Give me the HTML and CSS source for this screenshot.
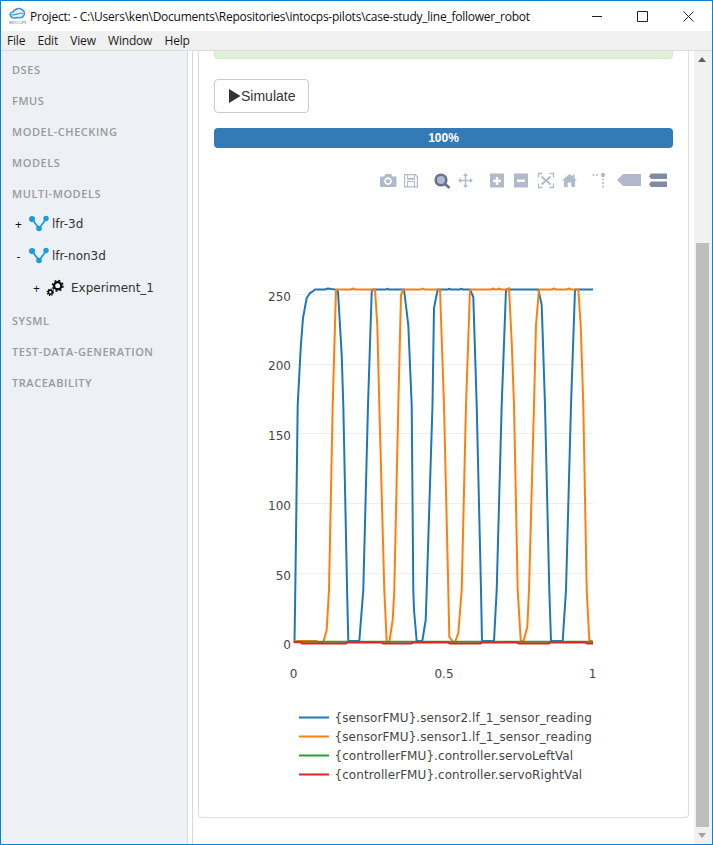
FILE: index.html
```html
<!DOCTYPE html>
<html lang="en">
<head>
<meta charset="utf-8">
<title>Project</title>
<link rel="stylesheet" href="styles.css">
</head>
<body>
<div class="window">
  <header class="titlebar">
    <svg class="logo" width="18" height="18" viewBox="0 0 18 18">
      <path class="logo-cloud" d="M3 9.500c-2-2-.5-4.500 2-4.500C6.500 2 11 .5 14 2.500c2.500 1.500 3 4 2 5.500c-1 2.500-4 3-7 2.500c-2 1-5 .5-6-1z"/>
      <path class="logo-swoosh" d="M3 7.500c4 2 7-2.500 12-1"/>
      <text class="logo-text" x="1" y="16.500">INTO-CPS</text>
    </svg>
    <span class="title">Project: - C:\Users\ken\Documents\Repositories\intocps-pilots\case-study_line_follower_robot</span>
    <div class="winbtns">
      <svg width="10" height="10" viewBox="0 0 10 10"><path class="winicon" d="M0 5.500h10"/></svg>
      <svg width="11" height="11" viewBox="0 0 11 11"><path class="winicon" d="M.5.500h10v10h-10z"/></svg>
      <svg width="11" height="11" viewBox="0 0 11 11"><path class="winicon" d="M.5.500l10 10M10.500.500l-10 10"/></svg>
    </div>
  </header>
  <nav class="menubar">
    <span>File</span><span>Edit</span><span>View</span><span>Window</span><span>Help</span>
  </nav>
  <div class="content">
    <aside class="sidebar">
      <div class="section">DSES</div>
      <div class="section">FMUS</div>
      <div class="section">MODEL-CHECKING</div>
      <div class="section">MODELS</div>
      <div class="section">MULTI-MODELS</div>
      <div class="tree-row">
        <span class="expander">+</span>
        <svg class="model-icon" width="21" height="18" viewBox="0 0 21 18"><path class="model-link" d="M4 4l7 9.500L18 4"/><circle class="model-dot" cx="4" cy="4" r="3"/><circle class="model-dot" cx="18" cy="3.500" r="2.700"/><circle class="model-dot" cx="11" cy="13.500" r="2.800"/></svg>
        <span>lfr-3d</span>
      </div>
      <div class="tree-row">
        <span class="expander">-</span>
        <svg class="model-icon" width="21" height="18" viewBox="0 0 21 18"><path class="model-link" d="M4 4l7 9.500L18 4"/><circle class="model-dot" cx="4" cy="4" r="3"/><circle class="model-dot" cx="18" cy="3.500" r="2.700"/><circle class="model-dot" cx="11" cy="13.500" r="2.800"/></svg>
        <span>lfr-non3d</span>
      </div>
      <div class="tree-row tree-row-nested">
        <span class="expander">+</span>
        <svg class="gear-icon" width="18" height="18" viewBox="0 0 18 18">
          <circle class="gear-big" cx="11.700" cy="6.700" r="3.600"/><circle class="gear-big-teeth" cx="11.700" cy="6.700" r="5.300"/>
          <circle class="gear-small" cx="4.300" cy="13.300" r="2"/><circle class="gear-small-teeth" cx="4.300" cy="13.300" r="3.200"/>
        </svg>
        <span>Experiment_1</span>
      </div>
      <div class="section">SYSML</div>
      <div class="section">TEST-DATA-GENERATION</div>
      <div class="section">TRACEABILITY</div>
    </aside>
    <main class="main">
      <section class="panel">
        <div class="alert"></div>
        <button class="btn" type="button">
          <svg class="play" width="12" height="14" viewBox="0 0 12 14"><path d="M0 0l11.500 7L0 14z"/></svg>Simulate
        </button>
        <div class="progress">100%</div>
        <svg class="chart" width="459" height="650" viewBox="214 160 459 650">
          <g class="tool">
            <path fill-rule="evenodd" d="M381 176.500h3l1.500-2.500h5.500l1.500 2.500h3a1 1 0 0 1 1 1v8.500a1 1 0 0 1-1 1h-14.500a1 1 0 0 1-1-1v-8.500a1 1 0 0 1 1-1zM388 177.300a3.800 3.800 0 1 0 .01 0zM388 179a2.100 2.100 0 1 1-.01 0z"/>
            <path fill-rule="evenodd" d="M404 174h11.500l2.500 2.500v11h-14zM405.200 175.200v11.100h1.800v-5.300h8v5.300h1.800v-9.300l-1.800-1.800v4.600h-8v-4.600zM408 181.900v4.400h6v-4.400zM407.900 175.200v2.800h6.200v-2.800z"/>
          </g>
          <circle class="tool-zoom-lens" cx="441" cy="180" r="5.300"/>
          <path class="tool-zoom-handle" d="M445 184l4.500 4"/>
          <g class="tool">
            <path d="M465.500 173l2.500 3h-1.800v3.800h3.800V178l3 2.500-3 2.500v-1.800h-3.800V185h1.800l-2.500 3-2.500-3h1.800v-3.800h-3.800v1.800l-3-2.500 3-2.500v1.800h3.800V176H463z"/>
            <path fill-rule="evenodd" d="M490 173.500h14v14h-14zM495.800 177v2.700h-2.800v2.600h2.800v2.700h2.400v-2.700h2.800v-2.600h-2.800V177z"/>
            <path fill-rule="evenodd" d="M514 173.500h14v14h-14zM517 179.500v2.600h8v-2.600z"/>
          </g>
          <path class="tool-line" d="M538.500 177.500v-4h4M549.500 173.500h4v4M553.500 183.500v4h-4M542.500 187.500h-4v-4"/>
          <path class="tool-line-thick" d="M541.500 176.500l9 8M550.500 176.500l-9 8"/>
          <g class="tool">
            <path d="M569.500 174l3 2.600V174.500h2v3.800l2.500 2.200h-2v6.500h-3.700v-4.500h-3.600v4.500H564v-6.500h-2z"/>
            <circle cx="593.500" cy="175" r="1"/><circle cx="597" cy="175" r="1"/><circle cx="603" cy="175" r="2.200"/>
            <circle cx="603" cy="179.500" r="1"/><circle cx="603" cy="183" r="1"/><circle cx="603" cy="186.500" r="1"/>
            <path d="M617 180l6-6h18v12h-18z"/>
          </g>
          <path class="tool-active" d="M651 173.500h16v5.500h-16l-2-2.700zM651 181.500h16v5.500h-16l-2-2.800z"/>
          <g class="grid">
            <path d="M294 294.500h299M294 364.500h299M294 433.500h299M294 503.500h299M294 573.500h299"/>
          </g>
          <g class="ticks ticks-y">
            <text x="291" y="301">250</text>
            <text x="291" y="370">200</text>
            <text x="291" y="440">150</text>
            <text x="291" y="510">100</text>
            <text x="291" y="580">50</text>
            <text x="291" y="649">0</text>
          </g>
          <g class="ticks ticks-x">
            <text x="293.500" y="678">0</text>
            <text x="444" y="678">0.5</text>
            <text x="592.500" y="678">1</text>
          </g>
          <polyline class="trace trace-blue" points="294.500,643 295.300,590 297.700,405 300.700,348 303,318 306.700,298 310,293 312,292 315,289.500 325,289.500 328,288.500 331,289 335,289.500 338,291.600 341.700,355 343.300,405 347.300,600 348.300,641 359.300,641 363.300,590 368,405 371.700,292 372.700,289.500 386,289.500 387,288.800 389,289.500 404,289.500 408.300,325 411.700,405 413.300,590 414,610 416.700,641 422.300,641 425.700,620 426.700,590 432.500,405 434,308 437.700,289.500 448,289.500 449,288.800 451,289.500 460,289.500 461,288.800 463,289.500 470,289.500 473.300,297 476.700,405 481,590 482,641 494,641 496.700,590 501.700,405 506,289.500 538.300,289.500 541.700,305 545,405 549.300,590 551,641 562.700,641 566,590 571,405 575,289.500 593,289.500"/>
          <polyline class="trace trace-orange" points="294,641 316,641 318,642 323.300,642 326.700,630 329,590 332.700,405 336,289.500 351,289.500 353,288.500 355,289.500 375,289.500 377.300,325 379.300,405 384.300,590 386.700,642 389.300,642 392.700,620 394.300,590 398.300,405 401,295 403.300,289.500 421,289.500 422.700,288.500 424.500,289.500 440,289.500 444,405 448.300,590 449.300,637 453.300,642 455,642 458.300,633 461.700,590 466,405 470,289.500 491,289.500 493,288.500 495,289.500 497,289.500 499,288.500 501,289.500 507,289.500 509,288 511.700,342 514,405 517.700,590 520.700,640 523.300,642 527.300,627 529,590 534,405 536,325 539,289.500 552,289.500 554,288.500 556,289.500 567,289.500 569,288.500 571,289.500 578.300,289.500 580.700,325 583.300,405 586.700,590 589.300,640 593,642"/>
          <polyline class="trace trace-green" points="294,641.800 593,641.800"/>
          <polyline class="trace trace-red" points="294,642.300 301,642.300 302,643.500 346,643.500 347,642.500 381.500,642.500 383,643.500 411,643.500 413,642.500 448,642.500 450,643.500 480,643.500 482,642.500 517,642.500 519,643.500 549,643.500 550,642.500 585.500,642.500 587,643.500 593,643.500"/>
          <path class="legend-line trace-blue" d="M299 717.500h30"/>
          <path class="legend-line trace-orange" d="M299 736.500h30"/>
          <path class="legend-line trace-green" d="M299 755.500h30"/>
          <path class="legend-line trace-red" d="M299 774.500h30"/>
          <g class="legend-text">
            <text x="334.500" y="722">{sensorFMU}.sensor2.lf_1_sensor_reading</text>
            <text x="334.500" y="741">{sensorFMU}.sensor1.lf_1_sensor_reading</text>
            <text x="334.500" y="760">{controllerFMU}.controller.servoLeftVal</text>
            <text x="334.500" y="779">{controllerFMU}.controller.servoRightVal</text>
          </g>
        </svg>
      </section>
    </main>
    <div class="scrollbar">
      <div class="scroll-arrow"><svg width="8" height="5" viewBox="0 0 8 5"><path d="M4 0l4 5H0z"/></svg></div>
      <div class="scroll-track"><div class="scroll-thumb"></div></div>
      <div class="scroll-arrow"><svg width="8" height="5" viewBox="0 0 8 5"><path d="M0 0h8L4 5z"/></svg></div>
    </div>
  </div>
</div>
</body>
</html>
```
FILE: styles.css
```css
* { box-sizing: border-box; }
html, body { margin: 0; padding: 0; height: 100%; overflow: hidden; }
body { font-family: "Open Sans", "Noto Sans", sans-serif; background: #fff; }

.window {
  display: flex;
  flex-direction: column;
  width: 713px;
  height: 845px;
  border: 1px solid #0f7fd0;
  overflow: hidden;
}

.titlebar {
  display: flex;
  align-items: center;
  height: 30px;
  flex: none;
  background: #fff;
  padding-left: 7px;
}
.logo { flex: none; }
.logo-cloud { fill: #e3f1fb; stroke: #3f9bd6; stroke-width: 1.6; }
.logo-swoosh { fill: none; stroke: #3f9bd6; stroke-width: 1.2; }
.logo-text { font-family: "Liberation Sans", sans-serif; font-size: 3.8px; fill: #666; }
.title { margin-left: 4px; font-size: 12px; color: #111; white-space: nowrap; letter-spacing: -.245px; }
.winbtns { display: flex; align-items: center; gap: 35px; margin-left: auto; padding-right: 18px; }
.winbtns svg { display: block; }
.winicon { fill: none; stroke: #222; stroke-width: 1; }

.menubar {
  display: flex;
  align-items: center;
  gap: 12.3px;
  height: 20px;
  flex: none;
  padding-left: 6px;
  background: #f0f0f0;
  border-bottom: 1px solid #dcdcdc;
  font-size: 12px;
  color: #1a1a1a;
  letter-spacing: -.2px;
}

.content { display: flex; flex: 1; min-height: 0; }

.sidebar {
  width: 187px;
  flex: none;
  padding-top: 3px;
  background: #edf0f5;
  border-right: 1px solid #d8d8d8;
}
.section {
  height: 31px;
  line-height: 31px;
  padding-left: 11px;
  font-size: 11px;
  font-weight: 600;
  letter-spacing: .55px;
  color: #9a9a9a;
  white-space: nowrap;
}
.tree-row {
  display: flex;
  align-items: center;
  height: 32px;
  padding-left: 13px;
  padding-bottom: 2px;
  font-family: "DejaVu Sans", Verdana, sans-serif;
  font-size: 12px;
  color: #333;
  white-space: nowrap;
}
.tree-row-nested { padding-left: 31px; }
.expander {
  width: 9px;
  margin-right: 5px;
  flex: none;
  font-family: "Open Sans", sans-serif;
  text-align: center;
  color: #111;
}
.model-icon { flex: none; margin-right: 3px; }
.model-link { fill: none; stroke: #1a9be0; stroke-width: 1.800; }
.model-dot { fill: #1a9be0; }
.gear-icon { flex: none; margin-right: 7px; }
.gear-big { fill: none; stroke: #000; stroke-width: 2.200; }
.gear-big-teeth { fill: none; stroke: #000; stroke-width: 1.400; stroke-dasharray: 2.080 2.080; }
.gear-small { fill: none; stroke: #000; stroke-width: 1.500; }
.gear-small-teeth { fill: none; stroke: #000; stroke-width: 1.100; stroke-dasharray: 1.260 1.250; }

.main {
  flex: none;
  width: 502px;
  margin-left: 4px;
  padding: 0 5px;
  border-left: 1px solid #d8d8d8;
  background: #fff;
}
.panel {
  padding: 0 15px 7px;
  border: 1px solid #ddd;
  border-top: 0;
  border-radius: 0 0 4px 4px;
}
.alert {
  height: 8px;
  background: #dff0d8;
  border: 1px solid #d6e9c6;
  border-top: 0;
  border-radius: 0 0 4px 4px;
}
.btn {
  display: flex;
  align-items: center;
  width: 95px;
  height: 34px;
  margin-top: 20px;
  padding: 0 0 0 14px;
  background: #fff;
  border: 1px solid #ccc;
  border-radius: 4px;
  font-family: "Liberation Sans", Arial, sans-serif;
  font-size: 14px;
  color: #333;
}
.play { flex: none; fill: #333; }
.progress {
  height: 20px;
  margin-top: 15px;
  background: #337ab7;
  border-radius: 4px;
  font-family: "Liberation Sans", Arial, sans-serif;
  font-size: 12px;
  font-weight: 700;
  line-height: 20px;
  color: #fff;
  text-align: center;
}
.chart { display: block; margin-top: 12px; }

.tool { fill: #b1bacc; }
.tool-zoom-lens { fill: #b1bacc; stroke: #66728f; stroke-width: 2.600; }
.tool-zoom-handle { stroke: #66728f; stroke-width: 2.600; fill: none; }
.tool-line { fill: none; stroke: #b1bacc; stroke-width: 1.300; }
.tool-line-thick { fill: none; stroke: #b1bacc; stroke-width: 1.800; }
.tool-active { fill: #7f8aa6; }

.grid path { fill: none; stroke: #eee; stroke-width: 1; }
.ticks text { font-family: "DejaVu Sans", Verdana, sans-serif; font-size: 12px; fill: #444; }
.ticks-y text { text-anchor: end; }
.ticks-x text { text-anchor: middle; }

.trace { fill: none; stroke-width: 2; stroke-linejoin: round; }
.legend-line { fill: none; stroke-width: 2; }
.trace-blue { stroke: #1f77b4; }
.trace-orange { stroke: #ff7f0e; }
.trace-green { stroke: #2ca02c; }
.trace-red { stroke: #d62728; }
.legend-text text { font-family: "DejaVu Sans", Verdana, sans-serif; font-size: 12px; letter-spacing: .07px; fill: #444; }

.scrollbar {
  display: flex;
  flex-direction: column;
  flex: none;
  width: 18px;
  background: #f1f1f1;
}
.scroll-arrow {
  display: flex;
  align-items: center;
  justify-content: center;
  height: 17px;
  flex: none;
  padding-right: 2px;
  fill: #606060;
}
.scroll-arrow:last-child { fill: #a3a3a3; }
.scroll-arrow svg { display: block; }
.scroll-track { flex: 1; min-height: 0; padding: 175px 3px 0 2px; }
.scroll-thumb { height: 100%; background: #bdbdbd; }
```
